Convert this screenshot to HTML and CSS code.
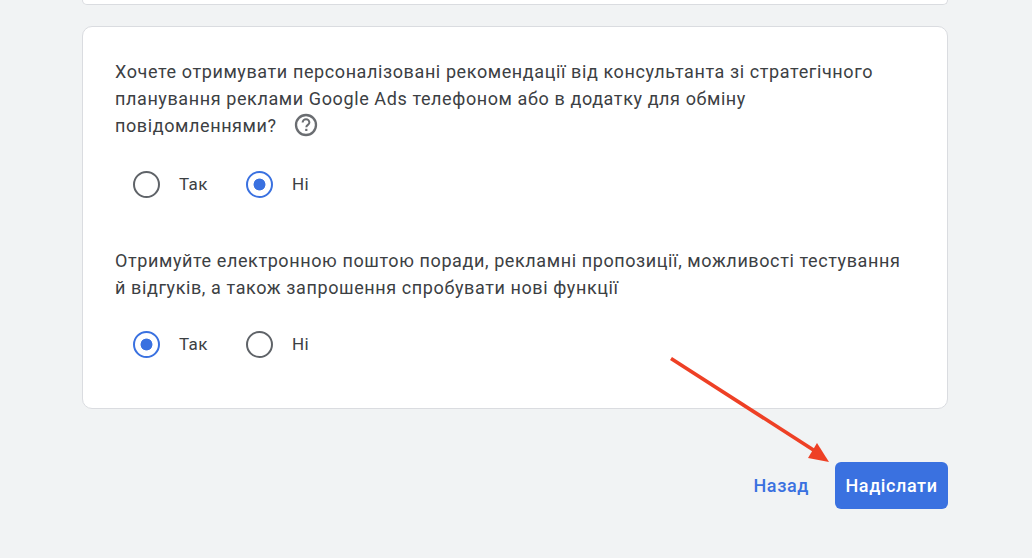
FILE: index.html
```html
<!doctype html>
<html>
  <head>
    <meta charset="utf-8">
    <title>Google Ads</title>
    <link rel="stylesheet" href="styles.css">
  </head>
  <body>
    <div class="page">
      <div class="card card-top"></div>
      <div class="card card-main">
        <p class="question first">Хочете отримувати персоналізовані рекомендації від консультанта зі стратегічного планування реклами Google Ads телефоном або в додатку для обміну <span class="nowrap">повідомленнями?<svg class="help" width="24" height="24" viewBox="0 0 24 24"><circle cx="12" cy="12" r="10" fill="none" stroke="#6a6d71" stroke-width="2.3"/><path d="M8.6 9.6a3.4 3.4 0 0 1 6.8 0c0 2.2-3.1 2.4-3.1 4.6" fill="none" stroke="#6a6d71" stroke-width="2"/><rect x="11.2" y="15.8" width="2.2" height="2.2" fill="#6a6d71"/></svg></span></p>
        <div class="radios">
          <div class="radio"><span class="dot"></span>Так</div>
          <div class="radio"><span class="dot on"></span>Ні</div>
        </div>
        <p class="question second">Отримуйте електронною поштою поради, рекламні пропозиції, можливості тестування й відгуків, а також запрошення спробувати нові функції</p>
        <div class="radios">
          <div class="radio"><span class="dot on"></span>Так</div>
          <div class="radio"><span class="dot"></span>Ні</div>
        </div>
      </div>
      <div class="actions">
        <a class="back">Назад</a>
        <button class="send">Надіслати</button>
      </div>
    </div>
    <svg class="arrow" width="180" height="120" viewBox="0 0 180 120">
      <path d="M1 1.500 L145 94" stroke="#ee4025" stroke-width="3.600" fill="none"/>
      <polygon points="159,105 138,101 147,86" fill="#ee4025"/>
    </svg>
  </body>
</html>
```

FILE: styles.css
```css
html, body {
  margin: 0;
  height: 558px;
  overflow: hidden;
}
body {
  background-color: #f1f3f4;
  font-family: Roboto, "Liberation Sans", sans-serif;
  color: #3c4043;
  position: relative;
}
.page {
  width: 866px;
  margin-left: 82px;
}
.card {
  background-color: #fff;
  border: 1px solid #dadce0;
  border-radius: 10px;
  box-sizing: border-box;
}
.card-top {
  height: 5px;
  border-top: 0;
  border-radius: 0 0 10px 10px;
}
.card-main {
  margin-top: 21px;
  height: 383px;
  padding: 31px 32px 0;
}
.question {
  margin: 0;
  font-size: 18px;
  line-height: 27px;
  letter-spacing: 0.6px;
}
.first {
  margin-bottom: 31px;
}
.second {
  margin-top: 49px;
  margin-bottom: 29px;
}
.nowrap {
  white-space: nowrap;
}
.help {
  margin-left: 17px;
  vertical-align: -5px;
}
.radios {
  display: flex;
  padding-left: 18px;
  height: 28px;
}
.radio {
  display: flex;
  align-items: center;
  width: 113px;
  font-size: 17px;
  letter-spacing: 0.35px;
}
.dot {
  width: 27px;
  height: 27px;
  margin-right: 19px;
  border: 2px solid #5f6368;
  border-radius: 50%;
  box-sizing: border-box;
  background-color: #fff;
}
.dot.on {
  border-color: #3a71e0;
  background: radial-gradient(circle, #3a71e0 0, #3a71e0 5.6px, #fff 6.3px);
}
.actions {
  display: flex;
  justify-content: flex-end;
  align-items: center;
  margin-top: 53px;
}
.back {
  margin-right: 26px;
  font-size: 18px;
  font-weight: 500;
  letter-spacing: 0.6px;
  color: #3a71e0;
}
.send {
  width: 113px;
  height: 47px;
  padding: 0;
  border: 0;
  border-radius: 6px;
  background-color: #3a71e0;
  color: #fff;
  font-family: inherit;
  font-size: 18px;
  font-weight: 500;
  letter-spacing: 0.6px;
}
.arrow {
  position: absolute;
  left: 670px;
  top: 357px;
}
```
